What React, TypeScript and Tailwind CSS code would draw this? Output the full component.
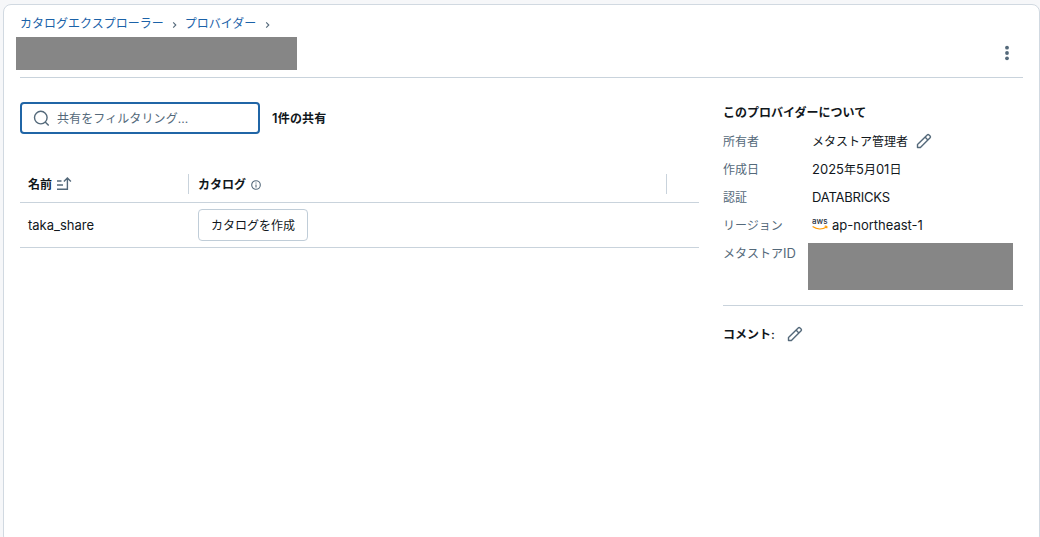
import { useState } from 'react';
import type { ReactNode } from 'react';

function ChevronIcon() {
  return (
    <svg width="5" height="8" viewBox="0 0 5 8" fill="none" stroke="#54697a" strokeWidth="1.1" className="mt-0.5 shrink-0">
      <path d="M1.2 1.3l2.6 2.7-2.6 2.7" />
    </svg>
  );
}

function PencilIcon() {
  return (
    <svg width="16" height="16" viewBox="0 0 16 16" fill="none" stroke="#54697a" strokeWidth="1.4" strokeLinejoin="round" className="shrink-0">
      <path d="M1.5 14.5v-2.9l9.7-9.7a1.3 1.3 0 0 1 1.8 0l1.1 1.1a1.3 1.3 0 0 1 0 1.8l-9.7 9.7z" />
      <path d="M9 4.1l2.9 2.9" />
    </svg>
  );
}

function SearchIcon() {
  return (
    <svg width="16" height="16" viewBox="0 0 16 16" fill="none" stroke="#54697a" strokeWidth="1.4" className="shrink-0">
      <circle cx="7.8" cy="7.6" r="6.3" />
      <path d="M12.2 12l3.5 3.5" />
    </svg>
  );
}

function SortIcon() {
  return (
    <svg width="16" height="16" viewBox="0 0 16 16" fill="none" stroke="#54697a" strokeWidth="1.4" className="shrink-0">
      <path d="M1 5h4.5M1 9h6M1 13.3h10.4V2.5M7.9 5.6l3.5-3.5 3.5 3.5" />
    </svg>
  );
}

function InfoIcon() {
  return (
    <svg width="10" height="10" viewBox="0 0 10 10" fill="none" stroke="#54697a" strokeWidth="1.1" className="mt-0.5 shrink-0">
      <circle cx="5" cy="5" r="4.3" />
      <path d="M5 4.4v3M5 2.4v1.1" />
    </svg>
  );
}

function AwsIcon() {
  return (
    <svg width="16" height="18" viewBox="0 0 16 18" fill="none" className="shrink-0 overflow-visible">
      <text x="0" y="7.7" fontSize="8" fontWeight="500" fill="#252f3e" textLength="15.5" lengthAdjust="spacingAndGlyphs">aws</text>
      <path d="M.6 10.6c4.2 2.8 9.8 2.8 13.6.7M12.7 10.3c1.9-.4 2.9-.1 1.9 2" stroke="#ff9900" strokeWidth="1.2" />
    </svg>
  );
}

function DetailRow({ label, children }: { label: string; children: ReactNode }) {
  return (
    <div className="flex h-7 items-center">
      <div className="w-[89px] shrink-0 pt-0.5 text-[#54697a]">{label}</div>
      <div className="flex items-center text-[#11171c]">{children}</div>
    </div>
  );
}

export default function App() {
  const [filter, setFilter] = useState('');

  return (
    <div className="h-[537px] overflow-hidden bg-[#f6f7f9] pt-1 pl-[3px] font-[Inter,'Noto_Sans_CJK_JP',sans-serif] text-[12px] leading-4 text-[#11171c]">
      <div className="h-[540px] rounded-lg border border-[#d1d9e1] bg-white pr-4 pl-4">
        <nav className="flex h-8 items-center pt-[5px] text-[#1b62a8]">
          <a href="#" className="whitespace-nowrap">カタログエクスプローラー</a>
          <span className="flex w-[21px] justify-center"><ChevronIcon /></span>
          <a href="#" className="whitespace-nowrap">プロバイダー</a>
          <span className="flex w-[23px] justify-center"><ChevronIcon /></span>
        </nav>

        <header className="flex h-[41px] items-start justify-between border-b border-[#c9d3dc]">
          <div className="-ml-1 h-[33px] w-[281px] bg-[#868686]" />
          <button aria-label="メニュー" className="flex h-8 w-8 items-center justify-center">
            <svg width="4" height="16" viewBox="0 0 4 16" fill="#54697a">
              <circle cx="2" cy="2.7" r="1.9" />
              <circle cx="2" cy="8" r="1.9" />
              <circle cx="2" cy="13.3" r="1.9" />
            </svg>
          </button>
        </header>

        <div className="flex gap-6 pt-6">
          <main className="w-[679px]">
            <div className="flex items-center gap-3">
              <label className="flex h-8 w-60 items-center gap-2 rounded border-2 border-[#2065a6] pl-[11px]">
                <SearchIcon />
                <input
                  type="text"
                  value={filter}
                  onChange={(e) => setFilter(e.target.value)}
                  placeholder="共有をフィルタリング..."
                  className="min-w-0 flex-1 pt-0.5 tracking-[0.1px] outline-none placeholder:text-[#54697a]"
                />
              </label>
              <span className="font-semibold tracking-[0.2px]"><span className="text-[13px]">1</span>件の共有</span>
            </div>

            <div className="mt-8">
              <div className="flex h-[37px] items-center border-b border-[#c9d3dc] font-semibold">
                <div className="flex h-5 w-[169px] items-center gap-1 border-r border-[#c9d3dc] pl-2">
                  <span className="pt-0.5">名前</span>
                  <SortIcon />
                </div>
                <div className="flex h-5 w-[478px] items-center gap-[5px] border-r border-[#c9d3dc] pl-[9px]">
                  <span className="pt-0.5">カタログ</span>
                  <InfoIcon />
                </div>
              </div>
              <div className="flex h-[45px] items-center border-b border-[#c9d3dc]">
                <div className="w-[178px] pl-2 text-[13px]">taka_share</div>
                <button className="h-8 w-[110px] rounded border border-[#c0cdd8] pt-0.5">カタログを作成</button>
              </div>
            </div>
          </main>

          <aside className="w-[300px]">
            <h2 className="pt-[3px] pb-1.5 font-semibold">このプロバイダーについて</h2>
            <DetailRow label="所有者">
              <span className="pt-0.5">メタストア管理者</span>
              <button aria-label="所有者を編集" className="ml-2"><PencilIcon /></button>
            </DetailRow>
            <DetailRow label="作成日">
              <span className="pt-px text-[13px]">2025<span className="text-[12px]">年</span>5<span className="text-[12px]">月</span>01<span className="text-[12px]">日</span></span>
            </DetailRow>
            <DetailRow label="認証"><span className="text-[13px] tracking-[-0.2px]">DATABRICKS</span></DetailRow>
            <DetailRow label="リージョン">
              <AwsIcon />
              <span className="ml-1 text-[13px]">ap-northeast-1</span>
            </DetailRow>
            <div className="flex h-[67px] border-b border-[#c9d3dc]">
              <div className="w-[85px] shrink-0 pt-1.5 whitespace-nowrap text-[#54697a]">メタストア<span className="text-[13px]">ID</span></div>
              <div className="mt-1 h-[47px] w-[205px] bg-[#868686]" />
            </div>
            <div className="flex h-14 items-center font-semibold">
              <span className="pt-0.5">コメント:</span>
              <button aria-label="コメントを編集" className="ml-3"><PencilIcon /></button>
            </div>
          </aside>
        </div>
      </div>
    </div>
  );
}
